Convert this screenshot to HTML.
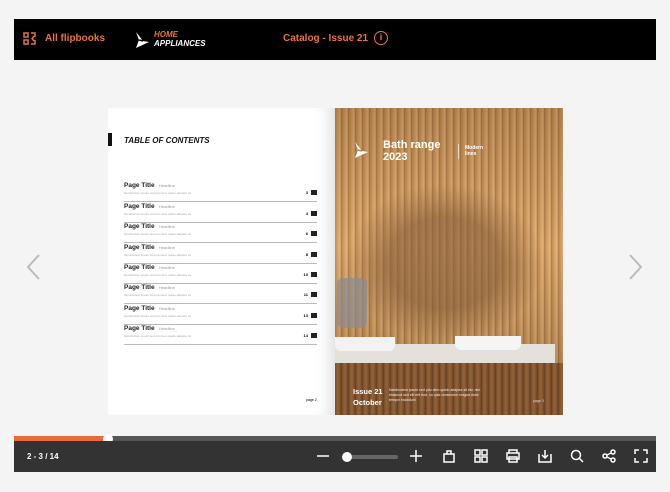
<!DOCTYPE html>
<html><head><style>
*{margin:0;padding:0;box-sizing:border-box}
body{width:670px;height:492px;background:#f4f4f4;font-family:"Liberation Sans",sans-serif;position:relative;overflow:hidden}
.top{position:absolute;left:14px;top:19px;width:642px;height:41px;background:#000}
.or{color:#e8743b;font-weight:bold;font-size:10px;position:absolute}
.page{position:absolute;top:108px;height:307px}
.l{left:108px;width:227px;background:#fff;box-shadow:inset -14px 0 14px -8px rgba(0,0,0,.12)}
.r{left:335px;width:228px;overflow:hidden;background:repeating-linear-gradient(90deg,#c08a52 0,#d9a468 3px,#e6b57a 5px,#a06c3b 7px);}
.row{position:absolute;left:16px;width:193px;height:20px;border-bottom:1.5px solid #bbb}
.row b{position:absolute;left:0;top:0;font-size:6.5px;line-height:7px;color:#222}
.row i{position:absolute;left:35px;top:2px;font-style:normal;font-size:4px;line-height:4px;color:#999}
.row s{position:absolute;left:0;top:10px;text-decoration:none;font-size:3px;line-height:3px;color:#aaa}
.row .n{position:absolute;right:9px;top:9px;font-size:4px;line-height:4px;font-weight:bold}
.row .k{position:absolute;right:0;top:8px;width:6px;height:5px;background:#222}
.bar{position:absolute;left:14px;top:441px;width:642px;height:31px;background:#333}
.ic{position:absolute;top:449px;stroke:#fff;fill:none;stroke-width:1.5}
</style></head><body>
<div class="top">
<svg style="position:absolute;left:9px;top:13px" width="13" height="13" viewBox="0 0 13 13" fill="none" stroke="#e8743b" stroke-width="1.5"><rect x="1" y="1" width="4" height="4"/><rect x="1" y="8" width="4" height="4"/><path d="M8 1h4v4M8 12h4V8M11 4l-2 2.5 2 2.5"/></svg>
<div class="or" style="left:31px;top:14px">All flipbooks</div>
<svg style="position:absolute;left:120px;top:12px" width="16" height="18" viewBox="0 0 16 18"><path d="M2 1l3 8-3 8 13-6-6-1z" fill="#fff"/><path d="M5 9l4 1" stroke="#000" stroke-width="1.5"/></svg>
<div style="position:absolute;left:140px;top:11px;font-size:8px;font-weight:bold;font-style:italic;line-height:9px;color:#e8743b">HOME<br><span style="color:#fff">APPLIANCES</span></div>
<div class="or" style="left:269px;top:14px">Catalog - Issue 21</div>
<div style="position:absolute;left:360px;top:12px;width:14px;height:14px;border:1.5px solid #e8743b;border-radius:50%;color:#e8743b;font-size:9px;font-weight:bold;text-align:center;line-height:11px">i</div>
</div>
<svg style="position:absolute;left:25px;top:254px" width="16" height="26"><path d="M14 1L3 13l11 12" stroke="#bbb" stroke-width="2" fill="none"/></svg>
<svg style="position:absolute;left:628px;top:254px" width="16" height="26"><path d="M2 1l11 12L2 25" stroke="#bbb" stroke-width="2" fill="none"/></svg>
<div class="page l">
<div style="position:absolute;left:0;top:25px;width:4px;height:13px;background:#111"></div>
<div style="position:absolute;left:16px;top:28px;font-size:8px;font-weight:bold;font-style:italic;color:#111">TABLE OF CONTENTS</div>
<div class="row" style="top:74px"><b>Page Title</b><i>Headline</i><s>Nambcutem ipsum sed pdu dem quisio adapiss sit</s><span class="n">3</span><span class="k"></span></div>
<div class="row" style="top:95px"><b>Page Title</b><i>Headline</i><s>Nambcutem ipsum sed pdu dem quisio adapiss sit</s><span class="n">4</span><span class="k"></span></div>
<div class="row" style="top:115px"><b>Page Title</b><i>Headline</i><s>Nambcutem ipsum sed pdu dem quisio adapiss sit</s><span class="n">6</span><span class="k"></span></div>
<div class="row" style="top:136px"><b>Page Title</b><i>Headline</i><s>Nambcutem ipsum sed pdu dem quisio adapiss sit</s><span class="n">8</span><span class="k"></span></div>
<div class="row" style="top:156px"><b>Page Title</b><i>Headline</i><s>Nambcutem ipsum sed pdu dem quisio adapiss sit</s><span class="n">10</span><span class="k"></span></div>
<div class="row" style="top:176px"><b>Page Title</b><i>Headline</i><s>Nambcutem ipsum sed pdu dem quisio adapiss sit</s><span class="n">11</span><span class="k"></span></div>
<div class="row" style="top:197px"><b>Page Title</b><i>Headline</i><s>Nambcutem ipsum sed pdu dem quisio adapiss sit</s><span class="n">13</span><span class="k"></span></div>
<div class="row" style="top:217px"><b>Page Title</b><i>Headline</i><s>Nambcutem ipsum sed pdu dem quisio adapiss sit</s><span class="n">14</span><span class="k"></span></div>
<div style="position:absolute;left:198px;top:290px;font-size:3.5px">page 2</div>
</div>
<div class="page r">
<div style="position:absolute;inset:0;background:linear-gradient(180deg,rgba(80,45,15,.25),rgba(255,230,180,.05) 45%,rgba(50,30,10,.3))"></div>
<div style="position:absolute;left:10px;top:75px;width:200px;height:160px;background:radial-gradient(ellipse at 50% 50%,rgba(130,90,55,.6) 40%,rgba(130,90,55,0) 70%)"></div>
<div style="position:absolute;left:2px;top:170px;width:30px;height:50px;background:#8a8c92;opacity:.7;border-radius:6px"></div>
<div style="position:absolute;left:0;top:236px;width:220px;height:19px;background:#e4e0dc"></div>
<div style="position:absolute;left:0;top:229px;width:60px;height:14px;background:#f2f2f2;border-radius:0 0 6px 6px"></div>
<div style="position:absolute;left:120px;top:228px;width:66px;height:14px;background:#f5f5f5;border-radius:0 0 6px 6px"></div>
<div style="position:absolute;left:0;top:255px;width:228px;height:52px;background:repeating-linear-gradient(90deg,#7a4f2a 0,#95633a 3px,#623f20 7px)"></div>
<svg style="position:absolute;left:17px;top:33px" width="18" height="18" viewBox="0 0 16 18"><path d="M2 1l3 8-3 8 13-6-6-1z" fill="#fff"/><path d="M5 9l4 1" stroke="#b48050" stroke-width="1.5"/></svg>
<div style="position:absolute;left:48px;top:31px;color:#fff;font-size:11px;font-weight:bold;line-height:12px">Bath range<br>2023</div>
<div style="position:absolute;left:123px;top:36px;width:1px;height:15px;background:#fff;opacity:.6"></div>
<div style="position:absolute;left:130px;top:37px;color:#fff;font-size:5px;line-height:6px;font-weight:bold">Modern<br>lines</div>
<div style="position:absolute;left:18px;top:278px;color:#fff;font-size:7.5px;font-weight:bold;line-height:11px">Issue 21<br>October</div>
<div style="position:absolute;left:54px;top:280px;color:#eee;font-size:3.5px;line-height:5px;width:95px">Nambcutem ipsum sed pdu dem quisio adapiss sit est, nim eiusmod sed elit erit fuot, oo quis consecutor magna dolor tempor incididunt</div>
<div style="position:absolute;left:198px;top:291px;color:#ddd;font-size:3.5px">page 3</div>
</div>
<div style="position:absolute;left:14px;top:436px;width:642px;height:5px;background:#555"></div>
<div style="position:absolute;left:14px;top:436px;width:93px;height:5px;background:#ec6a3a"></div>
<div style="position:absolute;left:103px;top:434px;width:10px;height:10px;border-radius:50%;background:#fff"></div>
<div class="bar"></div>
<div style="position:absolute;left:27px;top:452px;color:#fff;font-size:8px;font-weight:bold">2 - 3 / 14</div>
<svg class="ic" style="left:316px" width="14" height="14"><path d="M1 7h12"/></svg>
<div style="position:absolute;left:346px;top:455px;width:52px;height:4px;background:#666;border-radius:2px"></div>
<div style="position:absolute;left:342px;top:452px;width:10px;height:10px;background:#fff;border-radius:50%"></div>
<svg class="ic" style="left:409px" width="14" height="14"><path d="M1 7h12M7 1v12"/></svg>
<svg class="ic" style="left:442px" width="14" height="14"><path d="M2 5h10v8H2zM5 5V2h4v3"/></svg>
<svg class="ic" style="left:474px" width="14" height="14"><rect x="1" y="1" width="5" height="5"/><rect x="8" y="1" width="5" height="5"/><rect x="1" y="8" width="5" height="5"/><rect x="8" y="8" width="5" height="5"/></svg>
<svg class="ic" style="left:506px" width="14" height="14"><path d="M3 4V1h8v3M1 4h12v6H1zM3 8h8v5H3z"/></svg>
<svg class="ic" style="left:538px" width="14" height="14"><path d="M1 5v8h12V5M7 1v8M4 6l3 3 3-3"/></svg>
<svg class="ic" style="left:570px" width="14" height="14"><circle cx="6" cy="6" r="4.5"/><path d="M9.5 9.5L13 13"/></svg>
<svg class="ic" style="left:602px" width="14" height="14"><circle cx="3" cy="7" r="2"/><circle cx="11" cy="3" r="2"/><circle cx="11" cy="11" r="2"/><path d="M5 6l4-2M5 8l4 2"/></svg>
<svg class="ic" style="left:634px" width="14" height="14"><path d="M1 5V1h4M9 1h4v4M13 9v4H9M5 13H1V9"/></svg>
</body></html>
